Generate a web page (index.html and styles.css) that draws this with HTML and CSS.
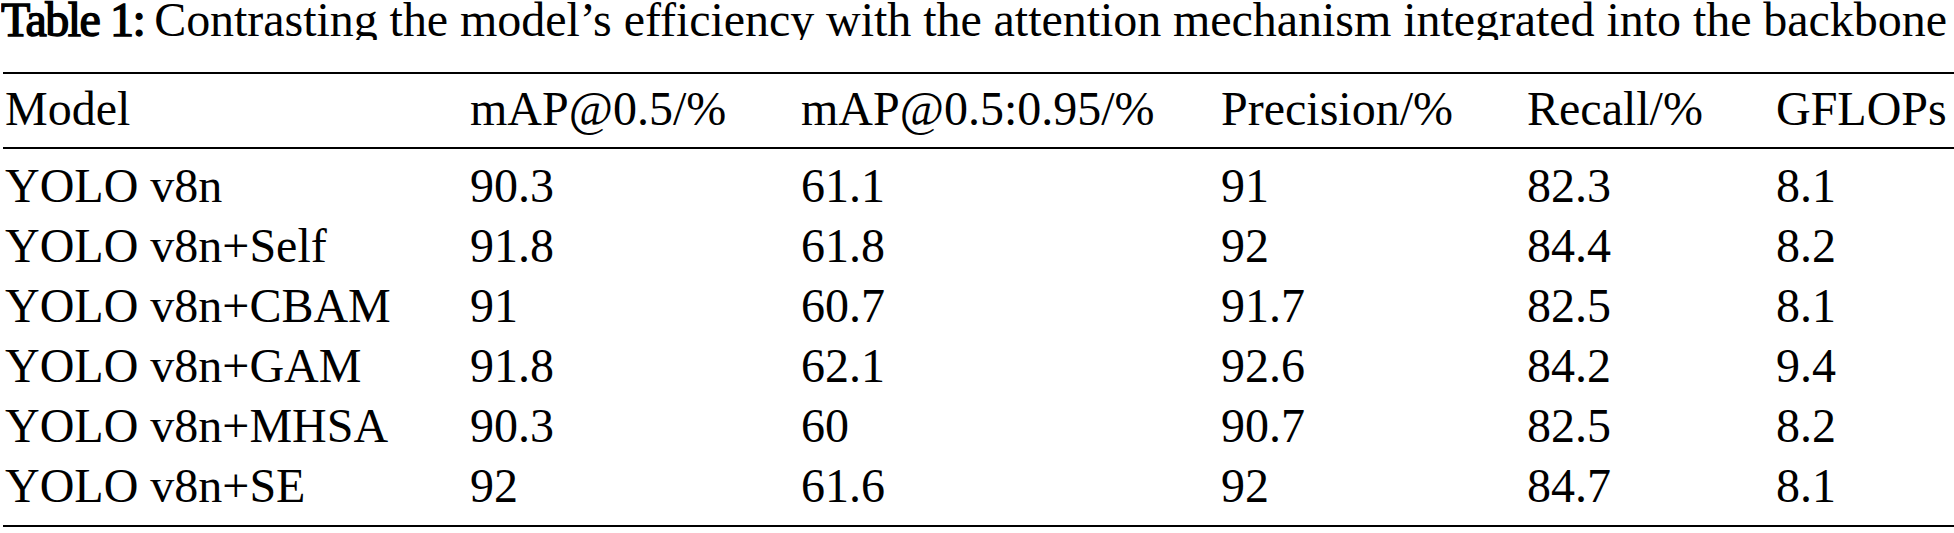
FILE: index.html
```html
<!DOCTYPE html>
<html>
<head>
<meta charset="utf-8">
<link rel="stylesheet" href="styles.css">
</head>
<body>
<div class="sheet">
  <div class="ttl"><span class="ttl-num">Table 1:</span> Contrasting the model’s efficiency with the attention mechanism integrated into the backbone</div>
  <div class="grid-wrap">
    <div class="ln hd">
      <div class="cl">Model</div><div class="cl">mAP@0.5/%</div><div class="cl">mAP@0.5:0.95/%</div><div class="cl">Precision/%</div><div class="cl">Recall/%</div><div class="cl">GFLOPs</div>
    </div>
    <div class="bd">
      <div class="ln"><div class="cl">YOLO v8n</div><div class="cl">90.3</div><div class="cl">61.1</div><div class="cl">91</div><div class="cl">82.3</div><div class="cl">8.1</div></div>
      <div class="ln"><div class="cl">YOLO v8n+Self</div><div class="cl">91.8</div><div class="cl">61.8</div><div class="cl">92</div><div class="cl">84.4</div><div class="cl">8.2</div></div>
      <div class="ln"><div class="cl">YOLO v8n+CBAM</div><div class="cl">91</div><div class="cl">60.7</div><div class="cl">91.7</div><div class="cl">82.5</div><div class="cl">8.1</div></div>
      <div class="ln"><div class="cl">YOLO v8n+GAM</div><div class="cl">91.8</div><div class="cl">62.1</div><div class="cl">92.6</div><div class="cl">84.2</div><div class="cl">9.4</div></div>
      <div class="ln"><div class="cl">YOLO v8n+MHSA</div><div class="cl">90.3</div><div class="cl">60</div><div class="cl">90.7</div><div class="cl">82.5</div><div class="cl">8.2</div></div>
      <div class="ln"><div class="cl">YOLO v8n+SE</div><div class="cl">92</div><div class="cl">61.6</div><div class="cl">92</div><div class="cl">84.7</div><div class="cl">8.1</div></div>
    </div>
  </div>
</div>
</body>
</html>
```
FILE: styles.css
```css
body {
  margin: 0;
  font-size: 48px;
  line-height: 60px;
  width: 1954px;
  height: 533px;
  overflow: hidden;
}
.sheet {
  font-family: "Liberation Serif", Tinos, "Times New Roman", serif;
  padding-left: 3px;
}
.ttl {
  font-family: "Liberation Serif", Tinos, "Times New Roman", serif;
  width: 1953px;
  height: 40px;
  line-height: 40px;
  margin-left: -2px;
  white-space: nowrap;
  overflow: hidden;
  letter-spacing: -0.05px;
}
.ttl-num {
  -webkit-text-stroke: 1.4px #000;
  letter-spacing: -1.5px;
  margin-right: -2px;
}
.grid-wrap {
  margin-top: 32px;
  border-top: 2px solid #000;
  border-bottom: 2px solid #000;
}
.ln {
  display: grid;
  grid-template-columns: 465px 331px 420px 306px 249px 1fr;
  line-height: 60px;
  padding-left: 2px;
}
.cl {
  font-family: "Liberation Serif", Tinos, "Times New Roman", serif;
}
.hd {
  padding-top: 5px;
  padding-bottom: 8px;
  border-bottom: 2px solid #000;
}
.bd {
  padding-top: 7px;
  padding-bottom: 9px;
}
```
